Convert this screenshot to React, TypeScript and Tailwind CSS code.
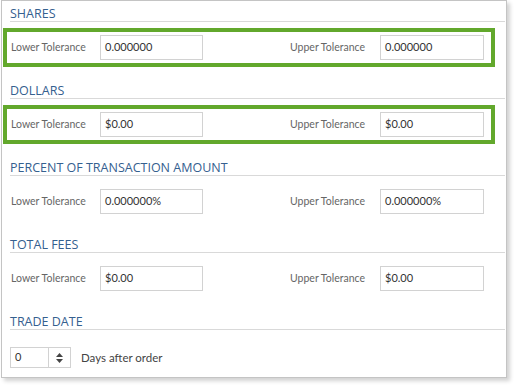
import React from "react";

const headFont = { fontFamily: '"Open Sans", "Liberation Sans", sans-serif' };
const bodyFont = { fontFamily: 'Lato, "Liberation Sans", sans-serif' };

interface RowProps {
  lower: string;
  upper: string;
  highlight?: boolean;
}

const Header: React.FC<{ title: string }> = ({ title }) => (
  <div className="ml-[8px] mr-[1px] h-[21px] border-b border-[#d9d9d9] flex items-end" style={headFont}>
    <span className="text-[12.5px] leading-[14px] text-[#35608f]">{title}</span>
  </div>
);

const ToleranceRow: React.FC<RowProps> = ({ lower, upper, highlight }) => (
  <div className="h-[56px] pt-[6px]">
    <div
      className={
        "ml-[1px] w-[492px] h-[39px] border-[4px] flex items-center pl-[4px] " +
        (highlight ? "border-[#62a82c]" : "border-transparent")
      }
    >
      {/* Lower */}
      <div className="w-[89px] text-[10.5px] text-[#666]">Lower Tolerance</div>
      <div className="w-[103px] h-[25px] border border-[#d2d2d2] flex items-center pl-[4px] text-[11px] text-[#333]">
        {lower}
      </div>
      {/* Upper */}
      <div className="w-[87px]" />
      <div className="w-[90px] text-[10.5px] text-[#666]">Upper Tolerance</div>
      <div className="w-[104px] h-[25px] border border-[#d2d2d2] flex items-center pl-[4px] text-[11px] text-[#333]">
        {upper}
      </div>
    </div>
  </div>
);

export default function App() {
  return (
    <div className="w-[517px] h-[387px] bg-white pl-[1px]" style={bodyFont}>
      <div className="w-[506px] h-[378px] bg-white border border-[#c4c4c4] shadow-[3px_3px_4px_rgba(0,0,0,0.18)] flex flex-col">
        <Header title="SHARES" />
        <ToleranceRow lower="0.000000" upper="0.000000" highlight />

        <Header title="DOLLARS" />
        <ToleranceRow lower="$0.00" upper="$0.00" highlight />

        <Header title="PERCENT OF TRANSACTION AMOUNT" />
        <ToleranceRow lower="0.000000%" upper="0.000000%" />

        <Header title="TOTAL FEES" />
        <ToleranceRow lower="$0.00" upper="$0.00" />

        <Header title="TRADE DATE" />
        <div className="pt-[17px] pl-[8px] flex items-center">
          <div className="w-[61px] h-[21px] border border-[#d2d2d2] flex">
            <div className="w-[38px] border-r border-[#d2d2d2] flex items-center pl-[4px] text-[11px] text-[#333]">
              0
            </div>
            <div className="flex-1 flex flex-col items-center justify-center gap-[2px]">
              <svg width="7" height="4" viewBox="0 0 7 4">
                <path d="M0 4 L3.5 0 L7 4 Z" fill="#444" />
              </svg>
              <svg width="7" height="4" viewBox="0 0 7 4">
                <path d="M0 0 L3.5 4 L7 0 Z" fill="#444" />
              </svg>
            </div>
          </div>
          <span className="ml-[10px] text-[11.5px] text-[#444]">Days after order</span>
        </div>
      </div>
    </div>
  );
}
